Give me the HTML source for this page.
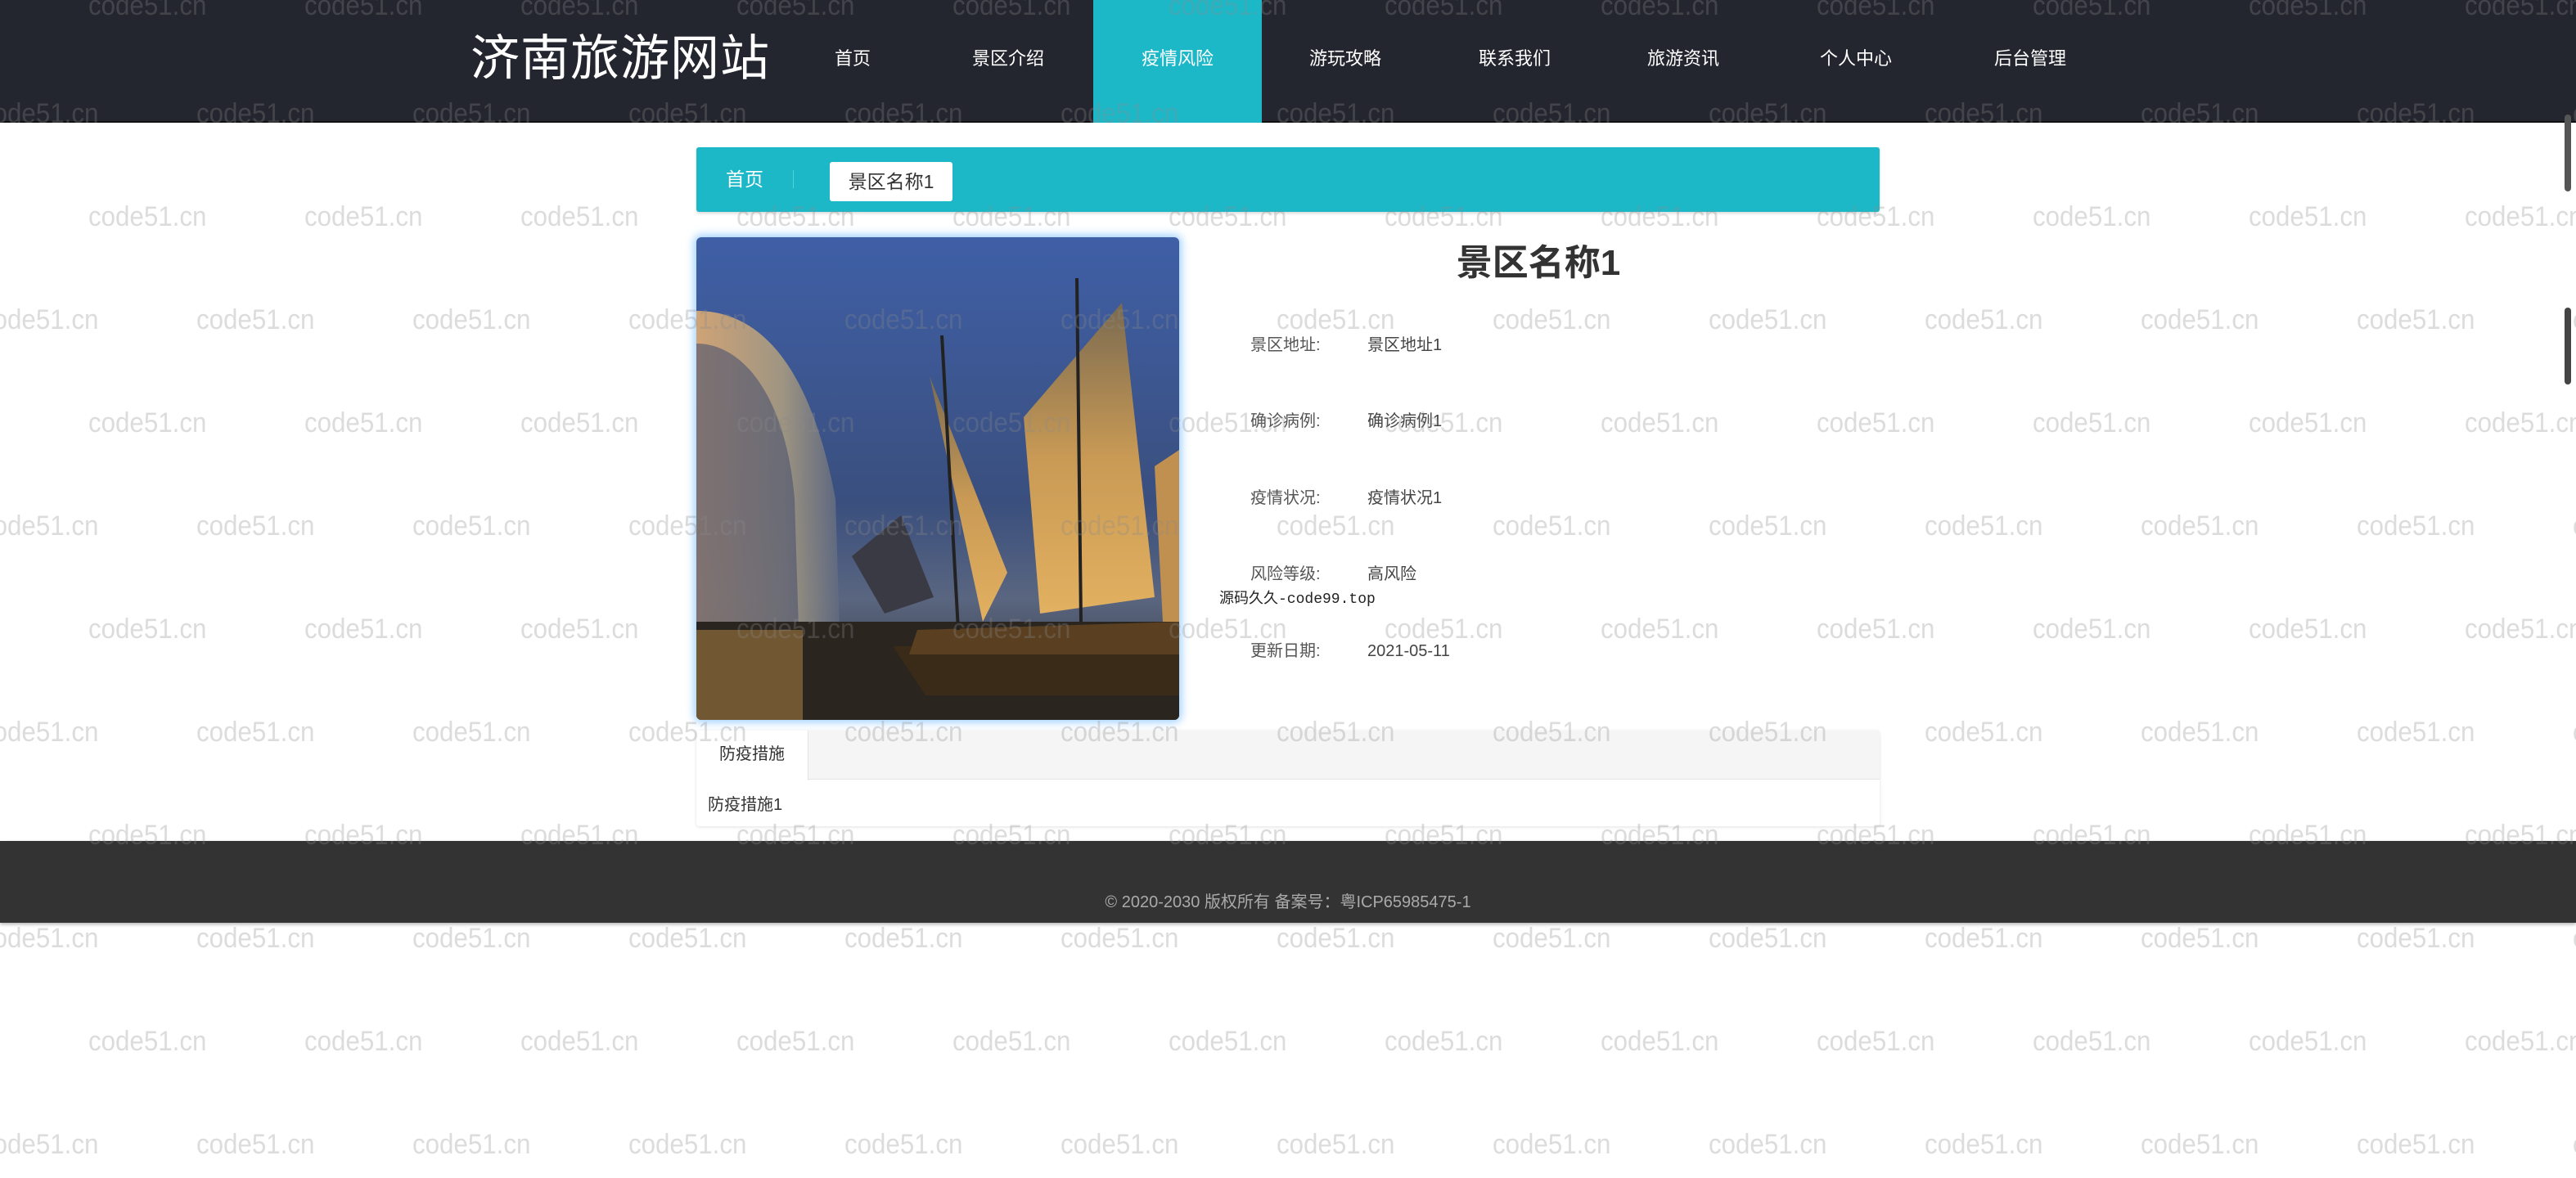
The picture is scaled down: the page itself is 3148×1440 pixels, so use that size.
<!DOCTYPE html>
<html><head><meta charset="utf-8">
<style>
*{margin:0;padding:0;box-sizing:border-box}
html,body{width:3148px;height:1440px;overflow:hidden;background:#fff;font-family:"Liberation Sans","Noto Sans CJK SC",sans-serif;position:relative}
.hdr{position:absolute;left:0;top:0;width:3148px;height:150px;background:#24262f;border-bottom:2px solid #111}
.logo{position:absolute;left:575px;top:36px;font-size:60px;color:#fff;letter-spacing:1px;line-height:72px}
.nav{position:absolute;top:0;height:150px;line-height:144px;font-size:22px;color:#fff;text-align:center}
.active{background:#1cb8c8}
.bc{position:absolute;left:851px;top:180px;width:1446px;height:79px;background:#1cb8c8;border-radius:3px;box-shadow:0 2px 3px rgba(0,0,0,.15)}
.bc .h{position:absolute;left:36px;top:0;line-height:79px;color:#fff;font-size:23px}
.bc .sep{position:absolute;left:118px;top:28px;width:1px;height:22px;background:#55d0dc}
.bc .cur{position:absolute;left:163px;top:18px;width:150px;height:48px;background:#fff;border-radius:3px;color:#333;font-size:23px;line-height:48px;text-align:center}
.img{position:absolute;left:851px;top:290px;width:590px;height:590px;border-radius:6px;overflow:hidden;box-shadow:0 0 10px 3px rgba(120,190,255,.7)}
.title{position:absolute;left:1680px;top:292px;width:400px;text-align:center;font-size:44px;font-weight:bold;color:#333;line-height:60px}
.lab{position:absolute;left:1528px;font-size:20px;color:#555;line-height:26px}
.val{position:absolute;left:1671px;font-size:20px;color:#444;line-height:26px}
.code99{position:absolute;left:1490px;top:717px;font-family:"Liberation Mono","Noto Sans CJK SC",monospace;font-size:18px;color:#222}
.tabs{position:absolute;left:851px;top:893px;width:1446px;height:117px;background:#fff;box-shadow:0 1px 4px rgba(0,0,0,.12);border-radius:4px}
.tabbar{position:absolute;left:0;top:0;width:1446px;height:60px;background:#f5f5f5;border-bottom:1px solid #e4e4e4}
.tab{position:absolute;left:0;top:0;width:137px;height:61px;background:#fff;border-right:1px solid #e4e4e4;text-align:center;line-height:58px;font-size:20px;color:#333}
.tc{position:absolute;left:14px;top:74px;font-size:20px;color:#333}
.ft{position:absolute;left:0;top:1028px;width:3148px;height:100px;background:#333;box-shadow:0 2px 4px rgba(0,0,0,.3)}
.ft div{position:absolute;left:0;width:3148px;top:58px;text-align:center;font-size:20px;color:#aaa}
.wm{position:absolute;left:0;top:0;width:3148px;height:1440px;pointer-events:none;overflow:hidden}
.wm span{position:absolute;font-size:34px;color:rgba(140,140,140,.3);white-space:nowrap;transform:scaleX(.92);transform-origin:left}
.sb{position:absolute;left:3134px;top:140px;width:8px;height:94px;background:#555;border-radius:4px}
.sb2{position:absolute;left:3134px;top:376px;width:8px;height:94px;background:#444;border-radius:4px}
</style></head><body>
<div class="hdr">
<div class="logo">济南旅游网站</div>
<div class="nav" style="left:1002px;width:80px">首页</div>
<div class="nav" style="left:1172px;width:120px">景区介绍</div>
<div class="nav active" style="left:1336px;width:206px">疫情风险</div>
<div class="nav" style="left:1584px;width:120px">游玩攻略</div>
<div class="nav" style="left:1791px;width:120px">联系我们</div>
<div class="nav" style="left:1997px;width:120px">旅游资讯</div>
<div class="nav" style="left:2208px;width:120px">个人中心</div>
<div class="nav" style="left:2421px;width:120px">后台管理</div>
</div>
<div class="bc"><span class="h">首页</span><span class="sep"></span><span class="cur">景区名称1</span></div>
<div class="img">
<svg width="590" height="590" viewBox="0 0 590 590">
<defs>
<linearGradient id="sky" x1="0" y1="0" x2="0" y2="1"><stop offset="0" stop-color="#3f5fa6"/><stop offset=".55" stop-color="#3a4f7e"/><stop offset=".75" stop-color="#5a6680"/><stop offset="1" stop-color="#2a2a30"/></linearGradient>
<linearGradient id="sail" x1="0" y1="0" x2="0" y2="1"><stop offset="0" stop-color="#7a6a50"/><stop offset=".5" stop-color="#c99a55"/><stop offset="1" stop-color="#e2b060"/></linearGradient>
<linearGradient id="bld" x1="0" y1="0" x2="1" y2="0"><stop offset="0" stop-color="#e8b070"/><stop offset=".6" stop-color="#b0a080"/><stop offset="1" stop-color="#606a80"/></linearGradient>
</defs>
<rect width="590" height="590" fill="url(#sky)"/>
<path d="M0 90 C80 90 140 160 170 320 L175 480 L0 480 Z" fill="url(#bld)" opacity=".85"/>
<path d="M0 130 C60 130 110 200 120 320 L125 480 L0 480Z" fill="#4a5270" opacity=".6"/>
<rect x="0" y="470" width="590" height="120" fill="#2b2520"/>
<rect x="0" y="480" width="130" height="110" fill="#a07a40" opacity=".6"/>
<path d="M240 500 L590 500 L590 560 L280 560 Z" fill="#3a2a18"/>
<path d="M270 480 L590 470 L590 510 L260 510Z" fill="#5a3f20"/>
<path d="M285 170 L350 470 L380 410 Z" fill="url(#sail)"/>
<path d="M400 220 L520 80 L560 440 L420 460 Z" fill="url(#sail)"/>
<path d="M190 390 L250 340 L290 440 L230 460Z" fill="#3a3a44"/>
<line x1="300" y1="120" x2="320" y2="480" stroke="#222" stroke-width="4"/>
<line x1="465" y1="50" x2="470" y2="470" stroke="#222" stroke-width="4"/>
<path d="M560 280 L590 260 L590 470 L570 470Z" fill="#c09050"/>
</svg>
</div>
<div class="title">景区名称1</div>
<div class="lab" style="top:409px">景区地址:</div><div class="val" style="top:409px">景区地址1</div>
<div class="lab" style="top:502px">确诊病例:</div><div class="val" style="top:502px">确诊病例1</div>
<div class="lab" style="top:596px">疫情状况:</div><div class="val" style="top:596px">疫情状况1</div>
<div class="lab" style="top:689px">风险等级:</div><div class="val" style="top:689px">高风险</div>
<div class="code99">源码久久-code99.top</div>
<div class="lab" style="top:783px">更新日期:</div><div class="val" style="top:783px">2021-05-11</div>
<div class="tabs"><div class="tabbar"></div><div class="tab">防疫措施</div><div class="tc">防疫措施1</div></div>
<div class="ft"><div>© 2020-2030 版权所有 备案号：粤ICP65985475-1</div></div>
<div class="sb"></div><div class="sb2"></div>
<div class="wm" id="wm">
<script>
(function(){var w=document.getElementById('wm'),h='';
var ys=[8,140,266,392,518,644,770,896,1022,1148,1274,1400];
for(var r=0;r<ys.length;r++){var off=(r%2==0)?108:-24;
for(var x=off;x<3148;x+=264){h+='<span style="left:'+x+'px;top:'+(ys[r]-20)+'px">code51.cn</span>';}}
w.innerHTML=h;})();
</script>
</div>
</body></html>
